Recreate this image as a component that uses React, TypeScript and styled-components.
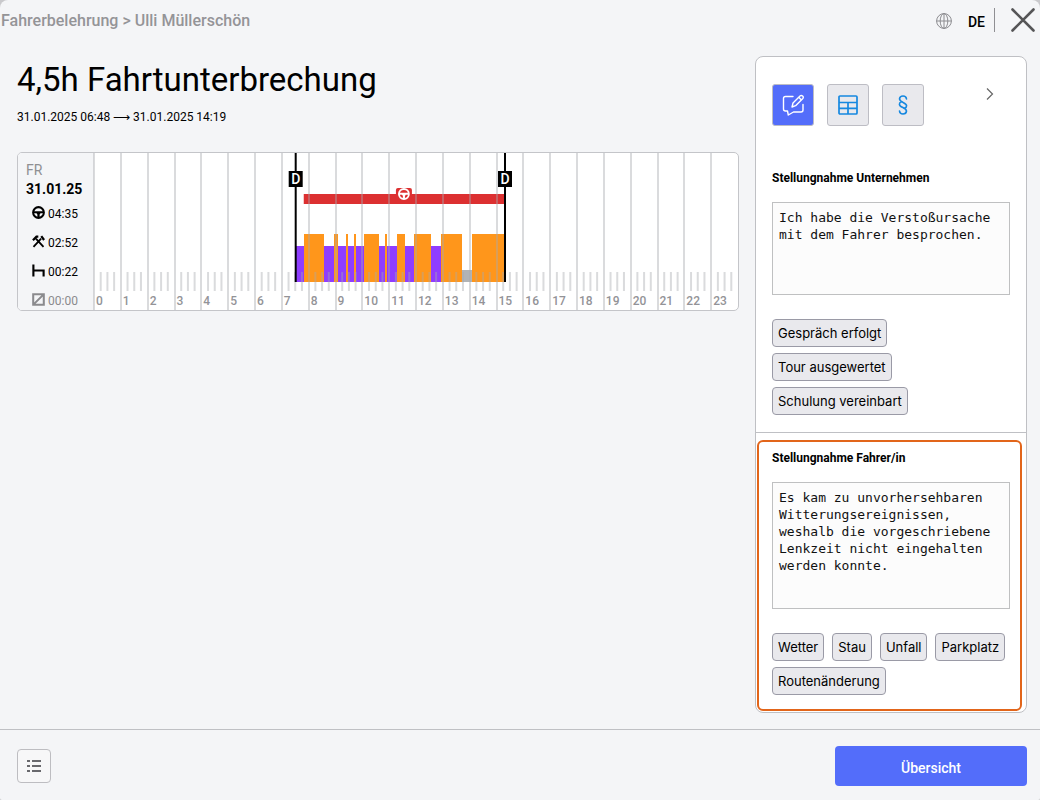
import React, { useState } from 'react';
import styled, { createGlobalStyle, css } from 'styled-components';

const GlobalStyle = createGlobalStyle`
  *, *::before, *::after { box-sizing: border-box; }
  body {
    margin: 0;
    background: #c9c9cc;
    color: #000;
    font-family: Roboto, "Liberation Sans", sans-serif;
  }
  button, textarea { margin: 0; }
`;

const Page = styled.div`
  display: flex;
  flex-direction: column;
  min-height: 100vh;
  border-radius: 8px 8px 2px 2px;
  background: #f4f5f7;
`;

const Header = styled.header`
  display: flex;
  align-items: center;
  justify-content: space-between;
  height: 40px;
  padding: 0 5px 0 1px;
`;

const Breadcrumb = styled.nav`
  padding-top: 2px;
  color: #949497;
  font-size: 16px;
  font-weight: 500;
  line-height: 20px;
  a { color: inherit; text-decoration: none; }
`;

const HeaderActions = styled.div`
  display: flex;
  align-items: center;
`;

const LanguageButton = styled.button`
  display: flex;
  align-items: center;
  gap: 16px;
  padding: 3px 9px 0 0;
  border: 0;
  background: none;
  color: #000;
  font: 500 14px/20px Roboto, sans-serif;
  svg { color: #8c8c90; margin-top: -2px; }
`;

const CloseButton = styled.button`
  display: flex;
  padding: 0 0 0 16px;
  border: 0;
  border-left: 1px solid #8f8f93;
  background: none;
  color: #555557;
`;

const Main = styled.main`
  display: grid;
  grid-template-columns: minmax(0, 1fr) 272px;
  align-items: start;
  gap: 16px;
  flex: 1;
  padding: 16px 13px 16px 17px;
`;

const Title = styled.h1`
  margin: 4px 0 0;
  font-size: 33px;
  font-weight: 400;
  line-height: 40px;
`;

const Period = styled.p`
  margin: 8px 0 26px;
  font-size: 12px;
  line-height: 18px;
`;

const DayCard = styled.section`
  display: flex;
  overflow: hidden;
  height: 159px;
  border: 1px solid #c4c5c9;
  border-radius: 5px;
  background: #fff;
`;

const DaySummary = styled.div`
  width: 76px;
  padding: 8px 8px 0;
  background: #f4f5f7;
`;

const Weekday = styled.div`
  color: #8f8f92;
  font-size: 14px;
  line-height: 18px;
`;

const DayDate = styled.div`
  font-size: 14px;
  font-weight: 700;
  line-height: 20px;
`;

const Totals = styled.ul`
  display: grid;
  gap: 11px;
  margin: 6px 0 0;
  padding: 0 0 0 6px;
  list-style: none;
`;

const Total = styled.li<{ $muted?: boolean }>`
  display: flex;
  align-items: center;
  gap: 3px;
  color: ${(p) => (p.$muted ? '#8a8a8d' : '#000')};
  font-size: 12px;
  line-height: 18px;
  svg { flex: none; margin-top: -4px; }
`;

const Chart = styled.svg`
  flex: 1;
  min-width: 0;
  height: 157px;
  overflow: visible;
  font-family: Roboto, sans-serif;
`;

const Panel = styled.aside`
  border: 1px solid #bfc0c4;
  border-radius: 8px;
  background: #fff;
`;

const Toolbar = styled.div`
  display: flex;
  gap: 13px;
  padding: 27px 16px 43px;
`;

const Tab = styled.button<{ $active?: boolean }>`
  display: flex;
  align-items: center;
  justify-content: center;
  width: 42px;
  height: 42px;
  padding: 0;
  border: 1px solid #bdbdc4;
  border-radius: 3px;
  background: #e9e9ed;
  color: #1688e0;
  ${(p) => p.$active && css`
    background: #536dfa;
    color: #fff;
  `}
`;

const CollapseButton = styled.button`
  display: flex;
  align-self: flex-start;
  margin: 3px 16px 0 auto;
  padding: 0;
  border: 0;
  background: none;
  color: #666;
`;

const Statement = styled.section<{ $highlighted?: boolean }>`
  padding: 0 16px 17px;
  ${(p) => p.$highlighted && css`
    margin: 7px 4px 1px 1px;
    padding: 7px 10px 14px 13px;
    border: 2px solid #e2651a;
    border-radius: 6px;
  `}
`;

const StatementLabel = styled.label`
  display: block;
  margin-bottom: 15px;
  font-size: 12px;
  font-weight: 700;
  line-height: 18px;
`;

const StatementText = styled.textarea<{ $height: number }>`
  display: block;
  width: 100%;
  height: ${(p) => p.$height}px;
  padding: 6px;
  border: 1px solid #bfc0c1;
  border-radius: 0;
  background: #fcfcfc;
  color: #111;
  font: 13px/17px "DejaVu Sans Mono", monospace;
  resize: none;
`;

const Suggestions = styled.div`
  display: flex;
  flex-wrap: wrap;
  gap: 6px 8px;
  margin-top: 24px;
`;

const Suggestion = styled.button`
  height: 28px;
  padding: 0 5px;
  border: 1px solid #9a9aa6;
  border-radius: 4px;
  background: #e9e9ed;
  color: #000;
  font: 13px/18px Inter, sans-serif;
`;

const Divider = styled.hr`
  height: 1px;
  margin: 0;
  border: 0;
  background: #bfc0c4;
`;

const Footer = styled.footer`
  display: flex;
  align-items: center;
  justify-content: space-between;
  padding: 16px 13px 14px 17px;
  border-top: 1px solid #bfc0c4;
`;

const ListButton = styled.button`
  display: flex;
  align-items: center;
  justify-content: center;
  width: 34px;
  height: 34px;
  padding: 0;
  border: 1px solid #bdbdc1;
  border-radius: 4px;
  background: #f7f7f8;
  color: #69696d;
`;

const PrimaryButton = styled.button`
  width: 192px;
  height: 40px;
  padding: 3px 0 0;
  border: 0;
  border-radius: 4px;
  background: #536dfa;
  color: #fff;
  font: 500 14px/20px Roboto, sans-serif;
`;

const GlobeIcon = () => (
  <svg width="16" height="16" viewBox="0 0 16 16" fill="none" stroke="currentColor" aria-hidden="true">
    <circle cx="8" cy="8" r="7.4" />
    <ellipse cx="8" cy="8" rx="3.8" ry="7.4" />
    <path d="M8 .6v14.8M.6 8h14.8" />
  </svg>
);

const CloseIcon = () => (
  <svg width="24" height="24" viewBox="0 0 24 24" fill="none" stroke="currentColor" strokeWidth="2.6" strokeLinecap="round" aria-hidden="true">
    <path d="M1.5 1.5l21 21M22.500 1.5l-21 21" />
  </svg>
);

const WheelShape = () => (
  <>
    <circle cx="7" cy="7" r="5.800" fill="none" stroke="currentColor" strokeWidth="2.200" />
    <path d="M1.500 5.600h11v2.200H9.200L8.200 9.200V12.500H5.800V9.200L4.800 7.800H1.500z" fill="currentColor" />
  </>
);

const WheelIcon = () => (
  <svg width="13" height="13" viewBox="0 0 14 14" aria-hidden="true"><WheelShape /></svg>
);

const HammersIcon = () => (
  <svg width="13" height="13" viewBox="0 0 14 14" fill="none" stroke="currentColor" aria-hidden="true">
    <path d="M1.600 12.800L9.800 4M12.400 12.800L4.200 4" strokeWidth="2" />
    <path d="M1 5.600L4.800 1.800H6.800M10 1.200L13 5.400" strokeWidth="2.400" />
  </svg>
);

const BedIcon = () => (
  <svg width="13" height="13" viewBox="0 0 14 14" fill="none" stroke="currentColor" strokeWidth="2.300" aria-hidden="true">
    <path d="M1.500 .5v13M1.500 7h11v6.500" />
  </svg>
);

const UnavailableIcon = () => (
  <svg width="13" height="13" viewBox="0 0 14 14" fill="none" stroke="currentColor" strokeWidth="2.200" aria-hidden="true">
    <path d="M1.300 1.300h11.400v11.400H1.300zM2 12L12 2" />
  </svg>
);

const CommentEditIcon = () => (
  <svg width="24" height="24" viewBox="0 0 24 24" fill="none" stroke="currentColor" strokeWidth="1.400" strokeLinecap="round" strokeLinejoin="round" aria-hidden="true">
    <path d="M12 3.500H4.500Q2.500 3.500 2.500 5.500V16Q2.500 18 4.500 18H6.500L7.300 22L12.500 19H20Q22 19 22 17V11.500" />
    <path d="M11 14l1-4 7-7q1.200-1.200 2.600 0t0 2.700l-7 7zM17.800 4.300l2.600 2.600" />
  </svg>
);

const TableIcon = () => (
  <svg width="20" height="20" viewBox="0 0 20 20" fill="none" stroke="currentColor" strokeWidth="1.700" aria-hidden="true">
    <rect x="1" y="1" width="18" height="18" rx="1" />
    <path d="M1 7.500h18M1 13.300h18M10 7.500v11.500" />
  </svg>
);

const ParagraphIcon = () => (
  <svg width="10" height="20" viewBox="0 0 10 20" fill="none" stroke="currentColor" strokeWidth="1.600" strokeLinecap="round" aria-hidden="true">
    <path d="M8.500 4Q8.200 1 5 1T1.500 3.800C1.500 7.500 8.600 7.300 8.600 10.800Q8.600 12.800 6.500 13.300" />
    <path d="M1.500 16Q1.800 19 5 19T8.500 16.200C8.500 12.500 1.400 12.700 1.400 9.200Q1.400 7.200 3.500 6.700" />
  </svg>
);

const ChevronIcon = () => (
  <svg width="8" height="14" viewBox="0 0 8 14" fill="none" stroke="currentColor" strokeWidth="1.200" aria-hidden="true">
    <path d="M1 1.500l5.500 5.500L1 12.500" />
  </svg>
);

const ListIcon = () => (
  <svg width="14" height="12" viewBox="0 0 14 12" fill="none" stroke="currentColor" strokeWidth="2" aria-hidden="true">
    <path d="M0 1h3M5 1h9M0 6h3M5 6h9M0 11h3M5 11h9" />
  </svg>
);

type Activity = 'work' | 'drive' | 'rest';

const activityStyle: Record<Activity, { fill: string; top: number }> = {
  work: { fill: '#8f3dff', top: 93 },
  drive: { fill: '#ff961b', top: 81 },
  rest: { fill: '#b1b3b5', top: 117 },
};

const baseline = 129;

// Start and end of each activity in minutes after midnight.
const activities: [number, number, Activity][] = [
  [452, 469, 'work'], [469, 514, 'drive'], [514, 537, 'work'], [537, 545, 'drive'],
  [545, 564, 'work'], [564, 567, 'drive'], [567, 581, 'work'], [581, 586, 'drive'],
  [586, 603, 'work'], [603, 637, 'drive'], [637, 651, 'work'], [651, 655, 'drive'],
  [655, 678, 'work'], [678, 696, 'drive'], [696, 716, 'work'], [716, 754, 'drive'],
  [754, 776, 'work'], [776, 823, 'drive'], [823, 846, 'rest'], [846, 920, 'drive'],
];

const hours = Array.from({ length: 24 }, (_, h) => h);
const at = (minutes: number) => `${(minutes / 1440) * 100}%`;

const DayChart = () => (
  <Chart role="img" aria-label="Tagesverlauf 31.01.25">
    <rect x={at(469)} y="41" width={at(451)} height="10" fill="#dc3031" />
    {activities.map(([start, end, kind]) => (
      <rect
        key={start}
        x={at(start)}
        y={activityStyle[kind].top}
        width={at(end - start)}
        height={baseline - activityStyle[kind].top}
        fill={activityStyle[kind].fill}
        shapeRendering="crispEdges"
      />
    ))}
    {hours.map((h) => (
      <g key={h} stroke="#a8aaaf" strokeOpacity=".42">
        <line x1={at(h * 60)} x2={at(h * 60)} y1="0" y2="157" strokeWidth="2" shapeRendering="crispEdges" />
        {[15, 30, 45].map((m) => (
          <line key={m} x1={at(h * 60 + m)} x2={at(h * 60 + m)} y1="119" y2="138" strokeWidth="2" />
        ))}
      </g>
    ))}
    {hours.map((h) => (
      <text key={h} x={at(h * 60)} dx="2" y="152" fontSize="12" fontWeight="500" fill="#939397">{h}</text>
    ))}
    <svg x={at(693)} y="35" overflow="visible">
      <rect x="-8" width="16" height="16" rx="2" fill="#dc3031" />
      <svg x="-6" y="0" width="12" height="12" viewBox="0 0 14 14" color="#fff"><WheelShape /></svg>
    </svg>
    {[451, 919].map((m) => (
      <svg key={m} x={at(m)} overflow="visible">
        <rect x="-1" width="2" height={baseline} />
        <rect x="-7" y="18" width="14" height="16" />
        <text y="31" textAnchor="middle" fontSize="14" fontWeight="500" fill="#fff">D</text>
      </svg>
    ))}
  </Chart>
);

interface StatementFormProps {
  id: string;
  label: string;
  initial: string;
  height: number;
  suggestions: string[];
  highlighted?: boolean;
}

const StatementForm = ({ id, label, initial, height, suggestions, highlighted }: StatementFormProps) => {
  const [text, setText] = useState(initial);
  return (
    <Statement $highlighted={highlighted}>
      <StatementLabel htmlFor={id}>{label}</StatementLabel>
      <StatementText id={id} $height={height} value={text} spellCheck={false} onChange={(e) => setText(e.target.value)} />
      <Suggestions>
        {suggestions.map((s) => (
          <Suggestion key={s} type="button" onClick={() => setText(`${text} ${s}`)}>{s}</Suggestion>
        ))}
      </Suggestions>
    </Statement>
  );
};

const App = () => (
  <>
    <GlobalStyle />
    <Page>
      <Header>
        <Breadcrumb><a href="#belehrung">Fahrerbelehrung</a> &gt; Ulli Müllerschön</Breadcrumb>
        <HeaderActions>
          <LanguageButton type="button"><GlobeIcon />DE</LanguageButton>
          <CloseButton type="button" aria-label="Schließen"><CloseIcon /></CloseButton>
        </HeaderActions>
      </Header>
      <Main>
        <div>
          <Title>4,5h Fahrtunterbrechung</Title>
          <Period>31.01.2025 06:48 ⟶ 31.01.2025 14:19</Period>
          <DayCard>
            <DaySummary>
              <Weekday>FR</Weekday>
              <DayDate>31.01.25</DayDate>
              <Totals>
                <Total><WheelIcon />04:35</Total>
                <Total><HammersIcon />02:52</Total>
                <Total><BedIcon />00:22</Total>
                <Total $muted><UnavailableIcon />00:00</Total>
              </Totals>
            </DaySummary>
            <DayChart />
          </DayCard>
        </div>
        <Panel>
          <Toolbar>
            <Tab type="button" $active aria-label="Stellungnahme"><CommentEditIcon /></Tab>
            <Tab type="button" aria-label="Tabelle"><TableIcon /></Tab>
            <Tab type="button" aria-label="Rechtsgrundlage"><ParagraphIcon /></Tab>
            <CollapseButton type="button" aria-label="Einklappen"><ChevronIcon /></CollapseButton>
          </Toolbar>
          <StatementForm
            id="company"
            label="Stellungnahme Unternehmen"
            initial="Ich habe die Verstoßursache mit dem Fahrer besprochen."
            height={93}
            suggestions={['Gespräch erfolgt', 'Tour ausgewertet', 'Schulung vereinbart']}
          />
          <Divider />
          <StatementForm
            id="driver"
            label="Stellungnahme Fahrer/in"
            initial="Es kam zu unvorhersehbaren Witterungsereignissen, weshalb die vorgeschriebene Lenkzeit nicht eingehalten werden konnte."
            height={127}
            suggestions={['Wetter', 'Stau', 'Unfall', 'Parkplatz', 'Routenänderung']}
            highlighted
          />
        </Panel>
      </Main>
      <Footer>
        <ListButton type="button" aria-label="Liste"><ListIcon /></ListButton>
        <PrimaryButton type="button">Übersicht</PrimaryButton>
      </Footer>
    </Page>
  </>
);

export default App;
